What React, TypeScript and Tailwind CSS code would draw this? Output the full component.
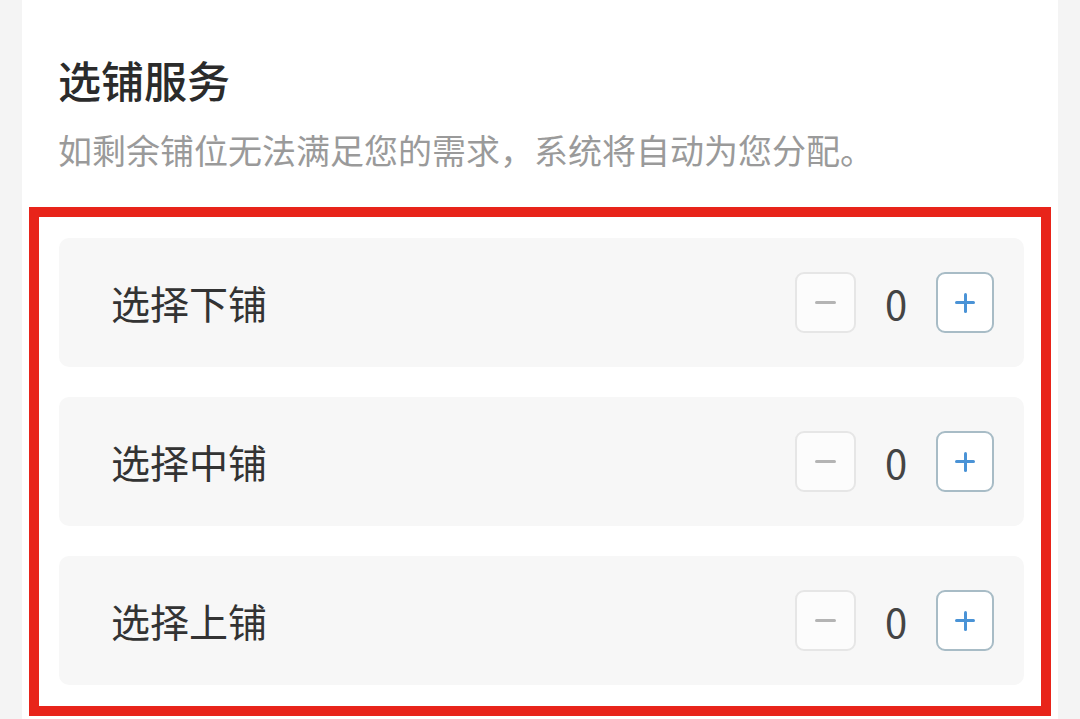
import { useState } from 'react';

const rows = ['选择下铺', '选择中铺', '选择上铺'];

const font = { fontFamily: '"Noto Sans CJK SC", "Noto Sans", sans-serif' };

const Stepper = () => {
  const [count, setCount] = useState(0);

  return (
    <div className="flex items-center">
      <button
        type="button"
        onClick={() => setCount((value) => Math.max(0, value - 1))}
        className="flex h-[61px] w-[61px] items-center justify-center rounded-[9px] border-2 border-[#e6e6e6] bg-[#fcfcfc]"
      >
        <span className="block h-[3px] w-[21px] rounded-full bg-[#b4b4b4]" />
      </button>
      <span className="w-[80px] text-center text-[40px] leading-none text-[#444]">{count}</span>
      <button
        type="button"
        onClick={() => setCount((value) => value + 1)}
        className="relative flex h-[61px] w-[58px] items-center justify-center rounded-[9px] border-2 border-[#a8bcc6] bg-white"
      >
        <span className="absolute h-[3px] w-[20px] rounded-full bg-[#4a93d6]" />
        <span className="absolute h-[20px] w-[3px] rounded-full bg-[#4a93d6]" />
      </button>
    </div>
  );
};

export default function App() {
  return (
    <div className="min-h-[719px] bg-[#f4f4f4] pl-[22px] pr-[22px]" style={font}>
      <div className="min-h-[719px] bg-white px-[7px] pt-[58px]">
        <header className="pl-[29px]">
          <h1 className="text-[43px] font-medium leading-[43px] text-[#2b2b2b]">选铺服务</h1>
          <p className="mt-[32px] text-[34px] leading-[34px] text-[#9a9a9a]">
            如剩余铺位无法满足您的需求，系统将自动为您分配。
          </p>
        </header>

        <section className="mt-[40px] flex flex-col gap-[30px] border-[10px] border-[#e8241a] pb-[21px] pl-[20px] pr-[17px] pt-[21px]">
          {rows.map((label) => (
            <div
              key={label}
              className="flex h-[129px] items-center justify-between rounded-[10px] bg-[#f7f7f7] pl-[52px] pr-[30px]"
            >
              <span className="text-[39px] leading-none text-[#333]">{label}</span>
              <Stepper />
            </div>
          ))}
        </section>
      </div>
    </div>
  );
}
